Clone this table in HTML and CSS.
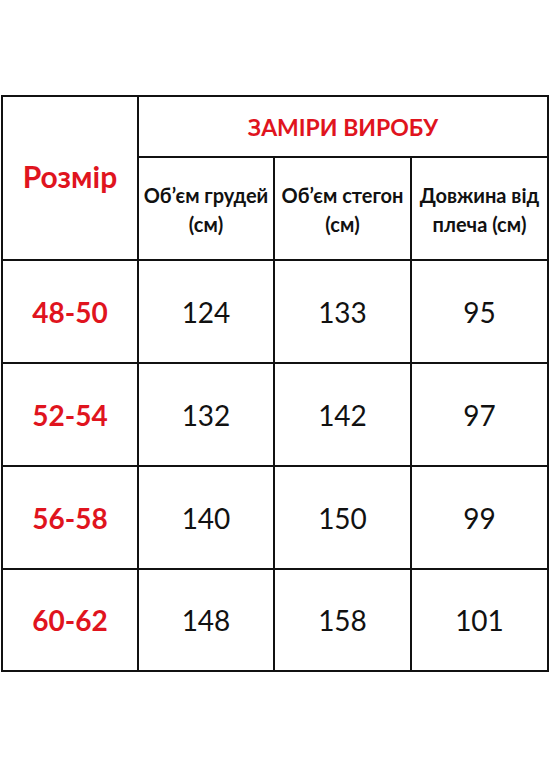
FILE: index.html
```html
<!DOCTYPE html>
<html lang="uk">
<head>
<meta charset="utf-8">
<title>Заміри виробу</title>
<link rel="stylesheet" href="styles.css">
</head>
<body>
<div class="page">
  <div class="table">
    <div class="cell size-head">Розмір</div>
    <div class="cell group-head">ЗАМІРИ ВИРОБУ</div>
    <div class="cell col-head">Об’єм грудей<br>(см)</div>
    <div class="cell col-head">Об’єм стегон<br>(см)</div>
    <div class="cell col-head">Довжина від<br>плеча (см)</div>

    <div class="cell size">48-50</div>
    <div class="cell num">124</div>
    <div class="cell num">133</div>
    <div class="cell num">95</div>

    <div class="cell size">52-54</div>
    <div class="cell num">132</div>
    <div class="cell num">142</div>
    <div class="cell num">97</div>

    <div class="cell size">56-58</div>
    <div class="cell num">140</div>
    <div class="cell num">150</div>
    <div class="cell num">99</div>

    <div class="cell size">60-62</div>
    <div class="cell num">148</div>
    <div class="cell num">158</div>
    <div class="cell num">101</div>
  </div>
</div>
</body>
</html>
```

FILE: styles.css
```css
html, body {
  margin: 0;
  padding: 0;
  background: #ffffff;
}

.page {
  padding: 95px 0 0 1px;
  font-family: Lato, "Open Sans", "Liberation Sans", sans-serif;
}

.table {
  display: grid;
  width: 548px;
  box-sizing: border-box;
  grid-template-columns: 134px 134px 135px 135px;
  grid-template-rows: 59px 101px 101px 101px 101px 100px;
  gap: 2px;
  padding: 2px;
  background: #111111;
}

.cell {
  background: #ffffff;
  display: flex;
  align-items: center;
  justify-content: center;
  text-align: center;
}

.size-head {
  grid-row: 1 / span 2;
  color: #e0141e;
  font-weight: 700;
  font-size: 30px;
  padding-bottom: 4px;
}

.group-head {
  grid-column: 2 / span 3;
  color: #e0141e;
  font-weight: 700;
  font-size: 23px;
}

.col-head {
  color: #111111;
  font-weight: 700;
  font-size: 20px;
  line-height: 29px;
  padding-top: 2px;
}

.size {
  color: #e0141e;
  font-weight: 700;
  font-size: 28px;
}

.num {
  color: #111111;
  font-size: 28px;
}
```
